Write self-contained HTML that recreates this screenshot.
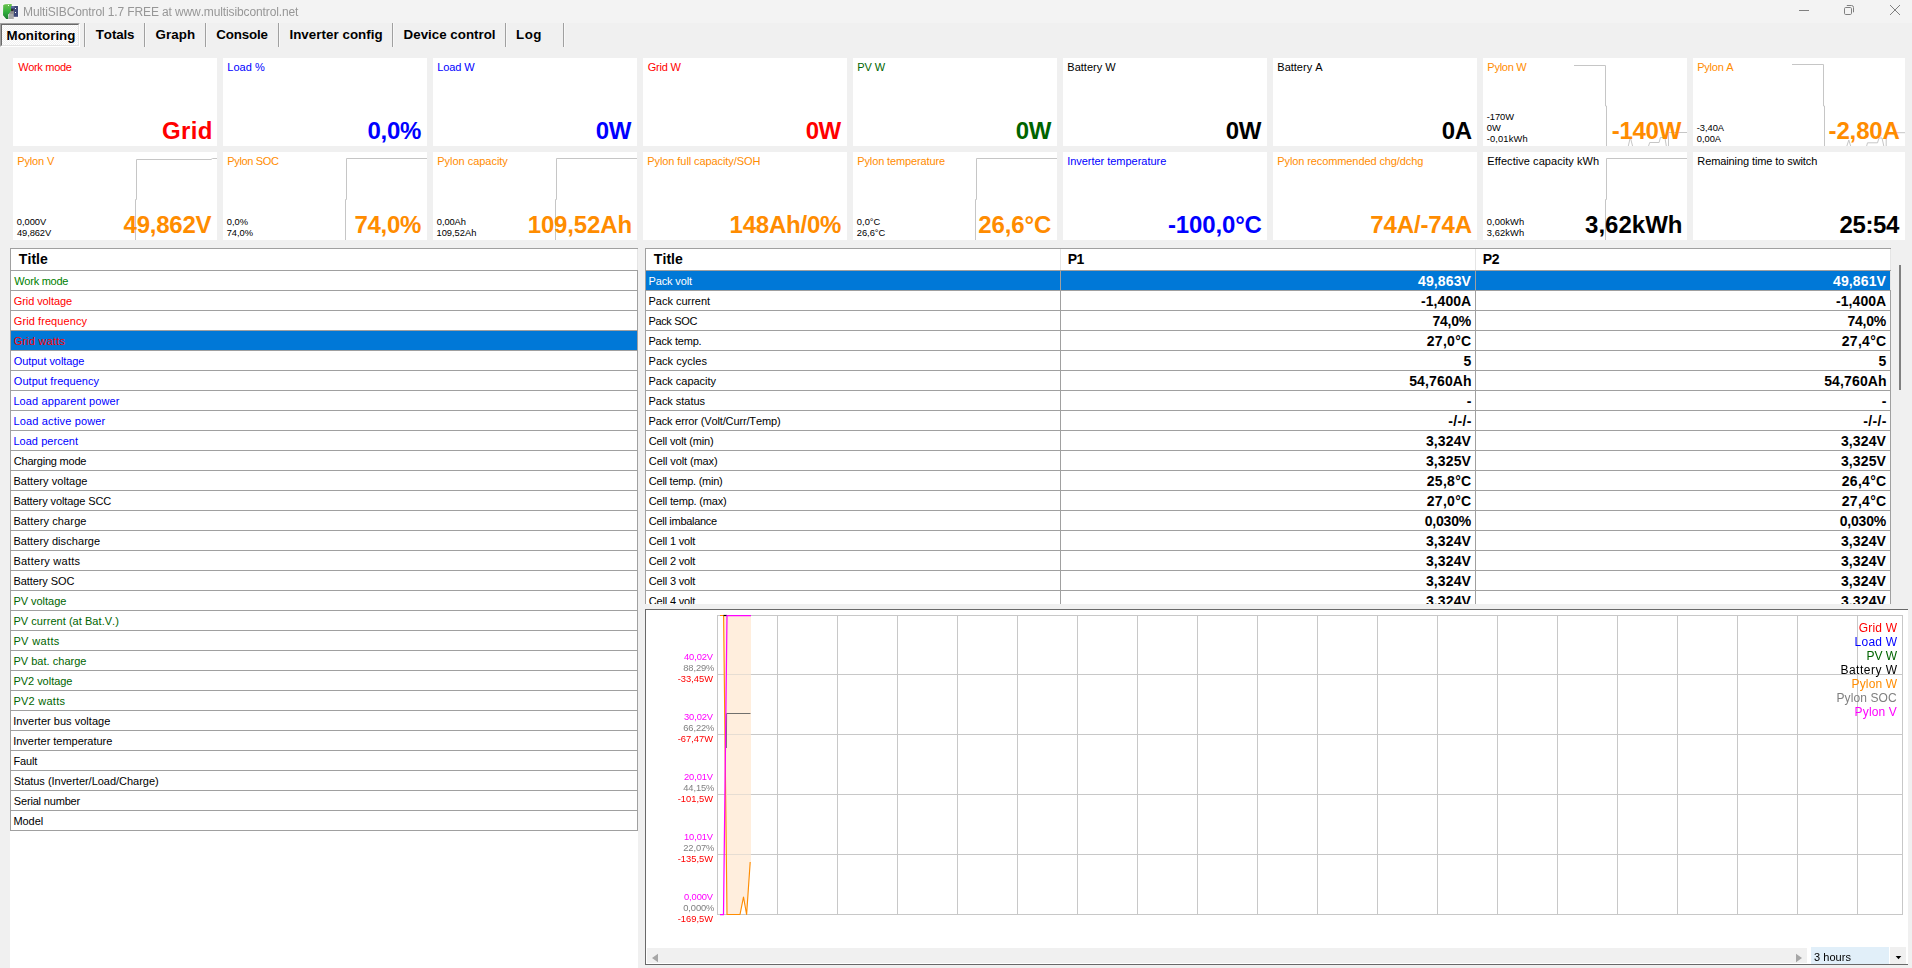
<!DOCTYPE html><html><head><meta charset="utf-8"><title>MultiSIBControl</title>
<style>html,body{margin:0;padding:0;}body{width:1912px;height:968px;overflow:hidden;background:#f0f0f0;position:relative;font-family:"Liberation Sans", sans-serif;font-kerning:none;}div{box-sizing:border-box;}svg{position:absolute;left:0;top:0;}</style></head><body>
<div style="position:absolute;left:0px;top:0px;width:1912px;height:23px;background:#f3f3f3;"></div>
<svg width="24" height="23" viewBox="0 0 24 23"><defs><linearGradient id="gg" x1="0" y1="0" x2="0" y2="1"><stop offset="0" stop-color="#6cc24e"/><stop offset="0.55" stop-color="#2fae3c"/><stop offset="1" stop-color="#1f7a34"/></linearGradient></defs><path d="M2.6 3.6 H12.2 V20 H5.5 L2.6 16.5 Z" fill="#fff" opacity="0.75"/><rect x="10.5" y="5.3" width="8.2" height="12.2" fill="#fff" opacity="0.75"/><path d="M3.2 5 L5 4.2 L11.8 4 L11.5 12 L8.2 14.5 L8.4 18.9 L6.2 18.9 L3 15.2 Z" fill="url(#gg)"/><rect x="11" y="6" width="7" height="10.8" fill="#3d4878"/><rect x="11" y="6" width="3.5" height="2.2" fill="#5f6c9e"/><path d="M8.3 18.9 L9.3 13.5 L11 10.8 L13.6 10.4 L13.8 18.9 Z" fill="#a9a9a9"/><path d="M9.3 13.5 L11 10.8 L13.6 10.4 L13.7 14 Z" fill="#8c8c8c"/><rect x="11.1" y="8.9" width="2.3" height="2.2" fill="#2e2e2e"/><rect x="15" y="8" width="1" height="1" fill="#fff"/><rect x="15" y="12" width="1" height="1" fill="#fff"/><rect x="8" y="5" width="1" height="1" fill="#f0fff0"/></svg>
<div style="position:absolute;left:22.92px;top:5.74px;font-size:12px;line-height:12px;color:#979797;white-space:pre;letter-spacing:-0.121px;will-change:transform;">MultiSIBControl 1.7 FREE at www.multisibcontrol.net</div>
<svg width="1912" height="23" viewBox="0 0 1912 23" fill="none" stroke="#808080" stroke-width="1"><path d="M1799 10.5 H1809"/><rect x="1844.5" y="7.5" width="7" height="7" rx="1.2"/><path d="M1846.8 5.5 H1851.5 Q1853.5 5.5 1853.5 7.5 V12.3"/><path d="M1890 5 L1900 15 M1900 5 L1890 15"/></svg>
<div style="position:absolute;left:0px;top:23px;width:80px;height:24px;background:#f0f0f0;border-top:1px solid #a0a0a0;border-left:1px solid #a0a0a0;border-bottom:1px solid #fff;border-right:1px solid #fff;"></div>
<div style="position:absolute;left:1px;top:24px;width:78px;height:22px;background:#f0f0f0;border-top:1px solid #696969;border-left:1px solid #696969;border-bottom:1px solid #e3e3e3;border-right:1px solid #e3e3e3;background:repeating-conic-gradient(#ffffff 0% 25%, #f0f0f0 0% 50%) 0 0/2px 2px;"></div>
<div style="position:absolute;left:6.61px;top:28.52px;font-size:13.33px;line-height:13.33px;color:#000;white-space:pre;font-weight:bold;letter-spacing:-0.007px;">Monitoring</div>
<div style="position:absolute;left:95.85px;top:27.52px;font-size:13.33px;line-height:13.33px;color:#000;white-space:pre;font-weight:bold;letter-spacing:-0.112px;">Totals</div>
<div style="position:absolute;left:155.45px;top:27.52px;font-size:13.33px;line-height:13.33px;color:#000;white-space:pre;font-weight:bold;letter-spacing:0.130px;">Graph</div>
<div style="position:absolute;left:216.25px;top:27.52px;font-size:13.33px;line-height:13.33px;color:#000;white-space:pre;font-weight:bold;letter-spacing:-0.147px;">Console</div>
<div style="position:absolute;left:289.41px;top:27.52px;font-size:13.33px;line-height:13.33px;color:#000;white-space:pre;font-weight:bold;letter-spacing:0.050px;">Inverter config</div>
<div style="position:absolute;left:403.61px;top:27.52px;font-size:13.33px;line-height:13.33px;color:#000;white-space:pre;font-weight:bold;letter-spacing:0.006px;">Device control</div>
<div style="position:absolute;left:516.11px;top:27.52px;font-size:13.33px;line-height:13.33px;color:#000;white-space:pre;font-weight:bold;letter-spacing:0.428px;">Log</div>
<div style="position:absolute;left:84px;top:23px;width:1px;height:24px;background:#a0a0a0;"></div>
<div style="position:absolute;left:85px;top:23px;width:1px;height:24px;background:#f8f8f8;"></div>
<div style="position:absolute;left:144px;top:23px;width:1px;height:24px;background:#a0a0a0;"></div>
<div style="position:absolute;left:145px;top:23px;width:1px;height:24px;background:#f8f8f8;"></div>
<div style="position:absolute;left:205px;top:23px;width:1px;height:24px;background:#a0a0a0;"></div>
<div style="position:absolute;left:206px;top:23px;width:1px;height:24px;background:#f8f8f8;"></div>
<div style="position:absolute;left:278px;top:23px;width:1px;height:24px;background:#a0a0a0;"></div>
<div style="position:absolute;left:279px;top:23px;width:1px;height:24px;background:#f8f8f8;"></div>
<div style="position:absolute;left:392px;top:23px;width:1px;height:24px;background:#a0a0a0;"></div>
<div style="position:absolute;left:393px;top:23px;width:1px;height:24px;background:#f8f8f8;"></div>
<div style="position:absolute;left:505px;top:23px;width:1px;height:24px;background:#a0a0a0;"></div>
<div style="position:absolute;left:506px;top:23px;width:1px;height:24px;background:#f8f8f8;"></div>
<div style="position:absolute;left:563px;top:23px;width:1px;height:24px;background:#a0a0a0;"></div>
<div style="position:absolute;left:564px;top:23px;width:1px;height:24px;background:#f8f8f8;"></div>
<div style="position:absolute;left:13px;top:58px;width:204px;height:88px;background:#fff;overflow:hidden;"></div>
<div style="position:absolute;left:18.15px;top:61.69px;font-size:11px;line-height:11px;color:#ff0000;white-space:pre;letter-spacing:-0.312px;">Work mode</div>
<div style="position:absolute;left:161.92px;top:119.18px;font-size:24px;line-height:24px;color:#ff0000;white-space:pre;font-weight:bold;letter-spacing:0.410px;">Grid</div>
<div style="position:absolute;left:223px;top:58px;width:204px;height:88px;background:#fff;overflow:hidden;"></div>
<div style="position:absolute;left:227.30px;top:61.69px;font-size:11px;line-height:11px;color:#0000ff;white-space:pre;letter-spacing:0.037px;">Load %</div>
<div style="position:absolute;left:367.55px;top:119.18px;font-size:24px;line-height:24px;color:#0000ff;white-space:pre;font-weight:bold;letter-spacing:-0.274px;">0,0%</div>
<div style="position:absolute;left:433px;top:58px;width:204px;height:88px;background:#fff;overflow:hidden;"></div>
<div style="position:absolute;left:437.30px;top:61.69px;font-size:11px;line-height:11px;color:#0000ff;white-space:pre;letter-spacing:-0.114px;">Load W</div>
<div style="position:absolute;left:595.85px;top:119.18px;font-size:24px;line-height:24px;color:#0000ff;white-space:pre;font-weight:bold;letter-spacing:-0.527px;">0W</div>
<div style="position:absolute;left:643px;top:58px;width:204px;height:88px;background:#fff;overflow:hidden;"></div>
<div style="position:absolute;left:647.65px;top:61.69px;font-size:11px;line-height:11px;color:#ff0000;white-space:pre;letter-spacing:-0.206px;">Grid W</div>
<div style="position:absolute;left:805.65px;top:119.18px;font-size:24px;line-height:24px;color:#ff0000;white-space:pre;font-weight:bold;letter-spacing:-0.427px;">0W</div>
<div style="position:absolute;left:853px;top:58px;width:204px;height:88px;background:#fff;overflow:hidden;"></div>
<div style="position:absolute;left:857.30px;top:61.69px;font-size:11px;line-height:11px;color:#006400;white-space:pre;letter-spacing:-0.124px;">PV W</div>
<div style="position:absolute;left:1015.65px;top:119.18px;font-size:24px;line-height:24px;color:#006400;white-space:pre;font-weight:bold;letter-spacing:-0.327px;">0W</div>
<div style="position:absolute;left:1063px;top:58px;width:204px;height:88px;background:#fff;overflow:hidden;"></div>
<div style="position:absolute;left:1067.30px;top:61.69px;font-size:11px;line-height:11px;color:#000000;white-space:pre;letter-spacing:0.007px;">Battery W</div>
<div style="position:absolute;left:1225.65px;top:119.18px;font-size:24px;line-height:24px;color:#000000;white-space:pre;font-weight:bold;letter-spacing:-0.327px;">0W</div>
<div style="position:absolute;left:1273px;top:58px;width:204px;height:88px;background:#fff;overflow:hidden;"></div>
<div style="position:absolute;left:1277.30px;top:61.69px;font-size:11px;line-height:11px;color:#000000;white-space:pre;">Battery A</div>
<div style="position:absolute;left:1441.75px;top:119.18px;font-size:24px;line-height:24px;color:#000000;white-space:pre;font-weight:bold;letter-spacing:-0.298px;">0A</div>
<div style="position:absolute;left:1483px;top:58px;width:204px;height:88px;background:#fff;overflow:hidden;"><svg width="204" height="88" viewBox="0 0 204 88" fill="none" stroke="#c6c6c6" stroke-width="1"><path d="M91 7.5 L122.5 7.5 L122.5 48 L123.5 48 L123.5 88.5 L145.2 88.5 L147.3 79.3 L149.7 88.5 L165.4 88.5 L166.7 84.5 L176.1 84.5 L177.4 79.5 L181.9 79.5 L183.4 88.5 L185.5 88.5 L185.5 74.5 L205 74.5"/></svg></div>
<div style="position:absolute;left:1487.30px;top:61.69px;font-size:11px;line-height:11px;color:#ff8c00;white-space:pre;letter-spacing:-0.252px;">Pylon W</div>
<div style="position:absolute;left:1611.66px;top:119.18px;font-size:24px;line-height:24px;color:#ff8c00;white-space:pre;font-weight:bold;letter-spacing:-0.257px;">-140W</div>
<div style="position:absolute;left:1486.79px;top:112.50px;font-size:9.33px;line-height:9.33px;color:#000;white-space:pre;letter-spacing:-0.058px;">-170W</div>
<div style="position:absolute;left:1486.84px;top:123.50px;font-size:9.33px;line-height:9.33px;color:#000;white-space:pre;">0W</div>
<div style="position:absolute;left:1486.79px;top:134.50px;font-size:9.33px;line-height:9.33px;color:#000;white-space:pre;letter-spacing:0.128px;">-0,01kWh</div>
<div style="position:absolute;left:1693px;top:58px;width:212px;height:88px;background:#fff;overflow:hidden;"><svg width="212" height="88" viewBox="0 0 212 88" fill="none" stroke="#c6c6c6" stroke-width="1"><path d="M99 6.5 L130.5 6.5 L130.5 48 L131.5 48 L131.5 88.5 L153.7 88.5 L155.8 82 L157.8 88.5 L173.5 88.5 L174.5 84.8 L184.5 84.8 L186 80 L189 80 L190.9 88.5 L193.2 88.5 L193.2 74.7 L213 74.7"/></svg></div>
<div style="position:absolute;left:1697.30px;top:61.69px;font-size:11px;line-height:11px;color:#ff8c00;white-space:pre;letter-spacing:-0.264px;">Pylon A</div>
<div style="position:absolute;left:1828.56px;top:119.18px;font-size:24px;line-height:24px;color:#ff8c00;white-space:pre;font-weight:bold;letter-spacing:-0.133px;">-2,80A</div>
<div style="position:absolute;left:1696.79px;top:123.50px;font-size:9.33px;line-height:9.33px;color:#000;white-space:pre;letter-spacing:-0.051px;">-3,40A</div>
<div style="position:absolute;left:1696.84px;top:134.50px;font-size:9.33px;line-height:9.33px;color:#000;white-space:pre;letter-spacing:-0.050px;">0,00A</div>
<div style="position:absolute;left:13px;top:152px;width:204px;height:88px;background:#fff;overflow:hidden;"><svg width="204" height="88" viewBox="0 0 204 88" fill="none" stroke="#c6c6c6" stroke-width="1"><path d="M122.5 89 V47.5 H123.5 V7.5 H198 L199.5 6.5 H205"/></svg></div>
<div style="position:absolute;left:17.30px;top:155.69px;font-size:11px;line-height:11px;color:#ff8c00;white-space:pre;letter-spacing:-0.160px;">Pylon V</div>
<div style="position:absolute;left:123.54px;top:213.18px;font-size:24px;line-height:24px;color:#ff8c00;white-space:pre;font-weight:bold;letter-spacing:-0.231px;">49,862V</div>
<div style="position:absolute;left:16.84px;top:217.50px;font-size:9.33px;line-height:9.33px;color:#000;white-space:pre;letter-spacing:-0.053px;">0,000V</div>
<div style="position:absolute;left:16.99px;top:228.50px;font-size:9.33px;line-height:9.33px;color:#000;white-space:pre;letter-spacing:-0.101px;">49,862V</div>
<div style="position:absolute;left:223px;top:152px;width:204px;height:88px;background:#fff;overflow:hidden;"><svg width="204" height="88" viewBox="0 0 204 88" fill="none" stroke="#c6c6c6" stroke-width="1"><path d="M122.5 89 V47.5 H123.5 V6.5 H205"/></svg></div>
<div style="position:absolute;left:227.30px;top:155.69px;font-size:11px;line-height:11px;color:#ff8c00;white-space:pre;letter-spacing:-0.348px;">Pylon SOC</div>
<div style="position:absolute;left:354.47px;top:213.18px;font-size:24px;line-height:24px;color:#ff8c00;white-space:pre;font-weight:bold;letter-spacing:-0.272px;">74,0%</div>
<div style="position:absolute;left:226.84px;top:217.50px;font-size:9.33px;line-height:9.33px;color:#000;white-space:pre;letter-spacing:-0.023px;">0,0%</div>
<div style="position:absolute;left:226.72px;top:228.50px;font-size:9.33px;line-height:9.33px;color:#000;white-space:pre;letter-spacing:-0.036px;">74,0%</div>
<div style="position:absolute;left:433px;top:152px;width:204px;height:88px;background:#fff;overflow:hidden;"><svg width="204" height="88" viewBox="0 0 204 88" fill="none" stroke="#c6c6c6" stroke-width="1"><path d="M122.5 89 V47.5 H123.5 V6.5 H205"/></svg></div>
<div style="position:absolute;left:437.30px;top:155.69px;font-size:11px;line-height:11px;color:#ff8c00;white-space:pre;letter-spacing:-0.031px;">Pylon capacity</div>
<div style="position:absolute;left:527.69px;top:213.18px;font-size:24px;line-height:24px;color:#ff8c00;white-space:pre;font-weight:bold;letter-spacing:-0.143px;">109,52Ah</div>
<div style="position:absolute;left:436.84px;top:217.50px;font-size:9.33px;line-height:9.33px;color:#000;white-space:pre;letter-spacing:-0.100px;">0,00Ah</div>
<div style="position:absolute;left:436.49px;top:228.50px;font-size:9.33px;line-height:9.33px;color:#000;white-space:pre;letter-spacing:-0.005px;">109,52Ah</div>
<div style="position:absolute;left:643px;top:152px;width:204px;height:88px;background:#fff;overflow:hidden;"></div>
<div style="position:absolute;left:647.30px;top:155.69px;font-size:11px;line-height:11px;color:#ff8c00;white-space:pre;letter-spacing:-0.083px;">Pylon full capacity/SOH</div>
<div style="position:absolute;left:729.49px;top:213.18px;font-size:24px;line-height:24px;color:#ff8c00;white-space:pre;font-weight:bold;letter-spacing:-0.207px;">148Ah/0%</div>
<div style="position:absolute;left:853px;top:152px;width:204px;height:88px;background:#fff;overflow:hidden;"><svg width="204" height="88" viewBox="0 0 204 88" fill="none" stroke="#c6c6c6" stroke-width="1"><path d="M122.5 89 V47.5 H123.5 V6.5 H205"/></svg></div>
<div style="position:absolute;left:857.30px;top:155.69px;font-size:11px;line-height:11px;color:#ff8c00;white-space:pre;letter-spacing:-0.131px;">Pylon temperature</div>
<div style="position:absolute;left:978.17px;top:213.18px;font-size:24px;line-height:24px;color:#ff8c00;white-space:pre;font-weight:bold;letter-spacing:-0.090px;">26,6°C</div>
<div style="position:absolute;left:856.84px;top:217.50px;font-size:9.33px;line-height:9.33px;color:#000;white-space:pre;letter-spacing:0.020px;">0,0°C</div>
<div style="position:absolute;left:856.73px;top:228.50px;font-size:9.33px;line-height:9.33px;color:#000;white-space:pre;">26,6°C</div>
<div style="position:absolute;left:1063px;top:152px;width:204px;height:88px;background:#fff;overflow:hidden;"></div>
<div style="position:absolute;left:1067.18px;top:155.69px;font-size:11px;line-height:11px;color:#0000ff;white-space:pre;letter-spacing:-0.029px;">Inverter temperature</div>
<div style="position:absolute;left:1167.96px;top:213.18px;font-size:24px;line-height:24px;color:#0000ff;white-space:pre;font-weight:bold;letter-spacing:-0.141px;">-100,0°C</div>
<div style="position:absolute;left:1273px;top:152px;width:204px;height:88px;background:#fff;overflow:hidden;"></div>
<div style="position:absolute;left:1277.30px;top:155.69px;font-size:11px;line-height:11px;color:#ff8c00;white-space:pre;letter-spacing:-0.103px;">Pylon recommended chg/dchg</div>
<div style="position:absolute;left:1370.37px;top:213.18px;font-size:24px;line-height:24px;color:#ff8c00;white-space:pre;font-weight:bold;letter-spacing:-0.136px;">74A/-74A</div>
<div style="position:absolute;left:1483px;top:152px;width:204px;height:88px;background:#fff;overflow:hidden;"><svg width="204" height="88" viewBox="0 0 204 88" fill="none" stroke="#c6c6c6" stroke-width="1"><path d="M122.5 89 V47.5 H123.5 V6.5 H205"/></svg></div>
<div style="position:absolute;left:1487.30px;top:155.69px;font-size:11px;line-height:11px;color:#000000;white-space:pre;letter-spacing:0.056px;">Effective capacity kWh</div>
<div style="position:absolute;left:1585.05px;top:213.18px;font-size:24px;line-height:24px;color:#000000;white-space:pre;font-weight:bold;letter-spacing:0.011px;">3,62kWh</div>
<div style="position:absolute;left:1486.84px;top:217.50px;font-size:9.33px;line-height:9.33px;color:#000;white-space:pre;letter-spacing:0.092px;">0,00kWh</div>
<div style="position:absolute;left:1486.84px;top:228.50px;font-size:9.33px;line-height:9.33px;color:#000;white-space:pre;letter-spacing:0.090px;">3,62kWh</div>
<div style="position:absolute;left:1693px;top:152px;width:212px;height:88px;background:#fff;overflow:hidden;"></div>
<div style="position:absolute;left:1697.30px;top:155.69px;font-size:11px;line-height:11px;color:#000000;white-space:pre;letter-spacing:-0.098px;">Remaining time to switch</div>
<div style="position:absolute;left:1839.57px;top:213.18px;font-size:24px;line-height:24px;color:#000000;white-space:pre;font-weight:bold;letter-spacing:-0.380px;">25:54</div>
<div style="position:absolute;left:10px;top:248px;width:628px;height:720px;background:#fff;"></div>
<div style="position:absolute;left:10px;top:248px;width:628px;height:1px;background:#a0a0a0;"></div>
<div style="position:absolute;left:10px;top:248px;width:1px;height:583px;background:#a0a0a0;"></div>
<div style="position:absolute;left:637px;top:270px;width:1px;height:561px;background:#a0a0a0;"></div>
<div style="position:absolute;left:637px;top:249px;width:1px;height:21px;background:#e5e5e5;"></div>
<div style="position:absolute;left:18.84px;top:252.15px;font-size:14px;line-height:14px;color:#000;white-space:pre;font-weight:bold;letter-spacing:0.064px;">Title</div>
<div style="position:absolute;left:10px;top:270px;width:628px;height:1px;background:#a0a0a0;"></div>
<div style="position:absolute;left:14.25px;top:275.69px;font-size:11px;line-height:11px;color:#008000;white-space:pre;letter-spacing:-0.262px;">Work mode</div>
<div style="position:absolute;left:10px;top:290px;width:628px;height:1px;background:#a0a0a0;"></div>
<div style="position:absolute;left:13.75px;top:295.69px;font-size:11px;line-height:11px;color:#ff0000;white-space:pre;letter-spacing:-0.088px;">Grid voltage</div>
<div style="position:absolute;left:10px;top:310px;width:628px;height:1px;background:#a0a0a0;"></div>
<div style="position:absolute;left:13.75px;top:315.69px;font-size:11px;line-height:11px;color:#ff0000;white-space:pre;letter-spacing:0.087px;">Grid frequency</div>
<div style="position:absolute;left:11px;top:331px;width:626px;height:19px;background:#0078d7;"></div>
<div style="position:absolute;left:10px;top:330px;width:628px;height:1px;background:#a0a0a0;"></div>
<div style="position:absolute;left:13.75px;top:335.69px;font-size:11px;line-height:11px;color:#ff0000;white-space:pre;letter-spacing:0.193px;">Grid watts</div>
<div style="position:absolute;left:10px;top:350px;width:628px;height:1px;background:#a0a0a0;"></div>
<div style="position:absolute;left:13.78px;top:355.69px;font-size:11px;line-height:11px;color:#0000ff;white-space:pre;letter-spacing:-0.065px;">Output voltage</div>
<div style="position:absolute;left:10px;top:370px;width:628px;height:1px;background:#a0a0a0;"></div>
<div style="position:absolute;left:13.78px;top:375.69px;font-size:11px;line-height:11px;color:#0000ff;white-space:pre;letter-spacing:0.064px;">Output frequency</div>
<div style="position:absolute;left:10px;top:390px;width:628px;height:1px;background:#a0a0a0;"></div>
<div style="position:absolute;left:13.40px;top:395.69px;font-size:11px;line-height:11px;color:#0000ff;white-space:pre;letter-spacing:0.112px;">Load apparent power</div>
<div style="position:absolute;left:10px;top:410px;width:628px;height:1px;background:#a0a0a0;"></div>
<div style="position:absolute;left:13.40px;top:415.69px;font-size:11px;line-height:11px;color:#0000ff;white-space:pre;letter-spacing:0.163px;">Load active power</div>
<div style="position:absolute;left:10px;top:430px;width:628px;height:1px;background:#a0a0a0;"></div>
<div style="position:absolute;left:13.40px;top:435.69px;font-size:11px;line-height:11px;color:#0000ff;white-space:pre;letter-spacing:0.042px;">Load percent</div>
<div style="position:absolute;left:10px;top:450px;width:628px;height:1px;background:#a0a0a0;"></div>
<div style="position:absolute;left:13.74px;top:455.69px;font-size:11px;line-height:11px;color:#000000;white-space:pre;letter-spacing:-0.205px;">Charging mode</div>
<div style="position:absolute;left:10px;top:470px;width:628px;height:1px;background:#a0a0a0;"></div>
<div style="position:absolute;left:13.40px;top:475.69px;font-size:11px;line-height:11px;color:#000000;white-space:pre;letter-spacing:0.051px;">Battery voltage</div>
<div style="position:absolute;left:10px;top:490px;width:628px;height:1px;background:#a0a0a0;"></div>
<div style="position:absolute;left:13.40px;top:495.69px;font-size:11px;line-height:11px;color:#000000;white-space:pre;letter-spacing:-0.102px;">Battery voltage SCC</div>
<div style="position:absolute;left:10px;top:510px;width:628px;height:1px;background:#a0a0a0;"></div>
<div style="position:absolute;left:13.40px;top:515.69px;font-size:11px;line-height:11px;color:#000000;white-space:pre;letter-spacing:0.120px;">Battery charge</div>
<div style="position:absolute;left:10px;top:530px;width:628px;height:1px;background:#a0a0a0;"></div>
<div style="position:absolute;left:13.40px;top:535.69px;font-size:11px;line-height:11px;color:#000000;white-space:pre;letter-spacing:0.074px;">Battery discharge</div>
<div style="position:absolute;left:10px;top:550px;width:628px;height:1px;background:#a0a0a0;"></div>
<div style="position:absolute;left:13.40px;top:555.69px;font-size:11px;line-height:11px;color:#000000;white-space:pre;letter-spacing:0.260px;">Battery watts</div>
<div style="position:absolute;left:10px;top:570px;width:628px;height:1px;background:#a0a0a0;"></div>
<div style="position:absolute;left:13.40px;top:575.69px;font-size:11px;line-height:11px;color:#000000;white-space:pre;letter-spacing:-0.072px;">Battery SOC</div>
<div style="position:absolute;left:10px;top:590px;width:628px;height:1px;background:#a0a0a0;"></div>
<div style="position:absolute;left:13.40px;top:595.69px;font-size:11px;line-height:11px;color:#006400;white-space:pre;letter-spacing:-0.023px;">PV voltage</div>
<div style="position:absolute;left:10px;top:610px;width:628px;height:1px;background:#a0a0a0;"></div>
<div style="position:absolute;left:13.40px;top:615.69px;font-size:11px;line-height:11px;color:#006400;white-space:pre;letter-spacing:0.045px;">PV current (at Bat.V.)</div>
<div style="position:absolute;left:10px;top:630px;width:628px;height:1px;background:#a0a0a0;"></div>
<div style="position:absolute;left:13.40px;top:635.69px;font-size:11px;line-height:11px;color:#006400;white-space:pre;letter-spacing:0.357px;">PV watts</div>
<div style="position:absolute;left:10px;top:650px;width:628px;height:1px;background:#a0a0a0;"></div>
<div style="position:absolute;left:13.40px;top:655.69px;font-size:11px;line-height:11px;color:#006400;white-space:pre;letter-spacing:0.025px;">PV bat. charge</div>
<div style="position:absolute;left:10px;top:670px;width:628px;height:1px;background:#a0a0a0;"></div>
<div style="position:absolute;left:13.40px;top:675.69px;font-size:11px;line-height:11px;color:#006400;white-space:pre;letter-spacing:-0.023px;">PV2 voltage</div>
<div style="position:absolute;left:10px;top:690px;width:628px;height:1px;background:#a0a0a0;"></div>
<div style="position:absolute;left:13.40px;top:695.69px;font-size:11px;line-height:11px;color:#006400;white-space:pre;letter-spacing:0.260px;">PV2 watts</div>
<div style="position:absolute;left:10px;top:710px;width:628px;height:1px;background:#a0a0a0;"></div>
<div style="position:absolute;left:13.28px;top:715.69px;font-size:11px;line-height:11px;color:#000000;white-space:pre;letter-spacing:0.021px;">Inverter bus voltage</div>
<div style="position:absolute;left:10px;top:730px;width:628px;height:1px;background:#a0a0a0;"></div>
<div style="position:absolute;left:13.28px;top:735.69px;font-size:11px;line-height:11px;color:#000000;white-space:pre;letter-spacing:-0.034px;">Inverter temperature</div>
<div style="position:absolute;left:10px;top:750px;width:628px;height:1px;background:#a0a0a0;"></div>
<div style="position:absolute;left:13.40px;top:755.69px;font-size:11px;line-height:11px;color:#000000;white-space:pre;letter-spacing:-0.143px;">Fault</div>
<div style="position:absolute;left:10px;top:770px;width:628px;height:1px;background:#a0a0a0;"></div>
<div style="position:absolute;left:13.80px;top:775.69px;font-size:11px;line-height:11px;color:#000000;white-space:pre;letter-spacing:-0.023px;">Status (Inverter/Load/Charge)</div>
<div style="position:absolute;left:10px;top:790px;width:628px;height:1px;background:#a0a0a0;"></div>
<div style="position:absolute;left:13.80px;top:795.69px;font-size:11px;line-height:11px;color:#000000;white-space:pre;letter-spacing:-0.174px;">Serial number</div>
<div style="position:absolute;left:10px;top:810px;width:628px;height:1px;background:#a0a0a0;"></div>
<div style="position:absolute;left:13.40px;top:815.69px;font-size:11px;line-height:11px;color:#000000;white-space:pre;letter-spacing:-0.030px;">Model</div>
<div style="position:absolute;left:10px;top:830px;width:628px;height:1px;background:#a0a0a0;"></div>
<div style="position:absolute;left:645px;top:248px;width:1246px;height:356px;overflow:hidden;background:#fff;">
<div style="position:absolute;left:0px;top:0px;width:1246px;height:1px;background:#a0a0a0;"></div>
<div style="position:absolute;left:0px;top:0px;width:1px;height:356px;background:#a0a0a0;"></div>
<div style="position:absolute;left:415px;top:1px;width:1px;height:21px;background:#e5e5e5;"></div>
<div style="position:absolute;left:830px;top:1px;width:1px;height:21px;background:#e5e5e5;"></div>
<div style="position:absolute;left:1245px;top:1px;width:1px;height:21px;background:#e5e5e5;"></div>
<div style="position:absolute;left:8.84px;top:4.15px;font-size:14px;line-height:14px;color:#000;white-space:pre;font-weight:bold;letter-spacing:0.064px;">Title</div>
<div style="position:absolute;left:422.66px;top:4.15px;font-size:14px;line-height:14px;color:#000;white-space:pre;font-weight:bold;letter-spacing:-0.400px;">P1</div>
<div style="position:absolute;left:837.66px;top:4.15px;font-size:14px;line-height:14px;color:#000;white-space:pre;font-weight:bold;letter-spacing:-0.200px;">P2</div>
<div style="position:absolute;left:1px;top:23px;width:1244px;height:19px;background:#0078d7;"></div>
<div style="position:absolute;left:0px;top:22px;width:1246px;height:1px;background:#a0a0a0;"></div>
<div style="position:absolute;left:415px;top:22px;width:1px;height:21px;background:#a0a0a0;"></div>
<div style="position:absolute;left:830px;top:22px;width:1px;height:21px;background:#a0a0a0;"></div>
<div style="position:absolute;left:1245px;top:23px;width:1px;height:20px;background:#e5e5e5;"></div>
<div style="position:absolute;left:3.50px;top:27.69px;font-size:11px;line-height:11px;color:#fff;white-space:pre;letter-spacing:-0.143px;">Pack volt</div>
<div style="position:absolute;left:773.09px;top:26.05px;font-size:14px;line-height:14px;color:#fff;white-space:pre;font-weight:bold;letter-spacing:0.108px;">49,863V</div>
<div style="position:absolute;left:1188.09px;top:26.05px;font-size:14px;line-height:14px;color:#fff;white-space:pre;font-weight:bold;letter-spacing:0.108px;">49,861V</div>
<div style="position:absolute;left:0px;top:42px;width:1246px;height:1px;background:#a0a0a0;"></div>
<div style="position:absolute;left:415px;top:42px;width:1px;height:21px;background:#a0a0a0;"></div>
<div style="position:absolute;left:830px;top:42px;width:1px;height:21px;background:#a0a0a0;"></div>
<div style="position:absolute;left:1245px;top:43px;width:1px;height:20px;background:#a0a0a0;"></div>
<div style="position:absolute;left:3.50px;top:47.69px;font-size:11px;line-height:11px;color:#000;white-space:pre;letter-spacing:-0.015px;">Pack current</div>
<div style="position:absolute;left:776.05px;top:46.05px;font-size:14px;line-height:14px;color:#000;white-space:pre;font-weight:bold;letter-spacing:0.052px;">-1,400A</div>
<div style="position:absolute;left:1191.05px;top:46.05px;font-size:14px;line-height:14px;color:#000;white-space:pre;font-weight:bold;letter-spacing:0.052px;">-1,400A</div>
<div style="position:absolute;left:0px;top:62px;width:1246px;height:1px;background:#a0a0a0;"></div>
<div style="position:absolute;left:415px;top:62px;width:1px;height:21px;background:#a0a0a0;"></div>
<div style="position:absolute;left:830px;top:62px;width:1px;height:21px;background:#a0a0a0;"></div>
<div style="position:absolute;left:1245px;top:63px;width:1px;height:20px;background:#a0a0a0;"></div>
<div style="position:absolute;left:3.50px;top:67.69px;font-size:11px;line-height:11px;color:#000;white-space:pre;letter-spacing:-0.361px;">Pack SOC</div>
<div style="position:absolute;left:787.40px;top:66.05px;font-size:14px;line-height:14px;color:#000;white-space:pre;font-weight:bold;letter-spacing:-0.231px;">74,0%</div>
<div style="position:absolute;left:1202.40px;top:66.05px;font-size:14px;line-height:14px;color:#000;white-space:pre;font-weight:bold;letter-spacing:-0.231px;">74,0%</div>
<div style="position:absolute;left:0px;top:82px;width:1246px;height:1px;background:#a0a0a0;"></div>
<div style="position:absolute;left:415px;top:82px;width:1px;height:21px;background:#a0a0a0;"></div>
<div style="position:absolute;left:830px;top:82px;width:1px;height:21px;background:#a0a0a0;"></div>
<div style="position:absolute;left:1245px;top:83px;width:1px;height:20px;background:#a0a0a0;"></div>
<div style="position:absolute;left:3.50px;top:87.69px;font-size:11px;line-height:11px;color:#000;white-space:pre;letter-spacing:-0.213px;">Pack temp.</div>
<div style="position:absolute;left:781.81px;top:86.05px;font-size:14px;line-height:14px;color:#000;white-space:pre;font-weight:bold;letter-spacing:0.282px;">27,0°C</div>
<div style="position:absolute;left:1196.81px;top:86.05px;font-size:14px;line-height:14px;color:#000;white-space:pre;font-weight:bold;letter-spacing:0.282px;">27,4°C</div>
<div style="position:absolute;left:0px;top:102px;width:1246px;height:1px;background:#a0a0a0;"></div>
<div style="position:absolute;left:415px;top:102px;width:1px;height:21px;background:#a0a0a0;"></div>
<div style="position:absolute;left:830px;top:102px;width:1px;height:21px;background:#a0a0a0;"></div>
<div style="position:absolute;left:1245px;top:103px;width:1px;height:20px;background:#a0a0a0;"></div>
<div style="position:absolute;left:3.50px;top:107.69px;font-size:11px;line-height:11px;color:#000;white-space:pre;letter-spacing:0.043px;">Pack cycles</div>
<div style="position:absolute;left:818.40px;top:106.05px;font-size:14px;line-height:14px;color:#000;white-space:pre;font-weight:bold;">5</div>
<div style="position:absolute;left:1233.40px;top:106.05px;font-size:14px;line-height:14px;color:#000;white-space:pre;font-weight:bold;">5</div>
<div style="position:absolute;left:0px;top:122px;width:1246px;height:1px;background:#a0a0a0;"></div>
<div style="position:absolute;left:415px;top:122px;width:1px;height:21px;background:#a0a0a0;"></div>
<div style="position:absolute;left:830px;top:122px;width:1px;height:21px;background:#a0a0a0;"></div>
<div style="position:absolute;left:1245px;top:123px;width:1px;height:20px;background:#a0a0a0;"></div>
<div style="position:absolute;left:3.50px;top:127.69px;font-size:11px;line-height:11px;color:#000;white-space:pre;letter-spacing:-0.028px;">Pack capacity</div>
<div style="position:absolute;left:764.17px;top:126.05px;font-size:14px;line-height:14px;color:#000;white-space:pre;font-weight:bold;letter-spacing:0.145px;">54,760Ah</div>
<div style="position:absolute;left:1179.17px;top:126.05px;font-size:14px;line-height:14px;color:#000;white-space:pre;font-weight:bold;letter-spacing:0.145px;">54,760Ah</div>
<div style="position:absolute;left:0px;top:142px;width:1246px;height:1px;background:#a0a0a0;"></div>
<div style="position:absolute;left:415px;top:142px;width:1px;height:21px;background:#a0a0a0;"></div>
<div style="position:absolute;left:830px;top:142px;width:1px;height:21px;background:#a0a0a0;"></div>
<div style="position:absolute;left:1245px;top:143px;width:1px;height:20px;background:#a0a0a0;"></div>
<div style="position:absolute;left:3.50px;top:147.69px;font-size:11px;line-height:11px;color:#000;white-space:pre;letter-spacing:-0.036px;">Pack status</div>
<div style="position:absolute;left:821.70px;top:146.05px;font-size:14px;line-height:14px;color:#000;white-space:pre;font-weight:bold;">-</div>
<div style="position:absolute;left:1236.70px;top:146.05px;font-size:14px;line-height:14px;color:#000;white-space:pre;font-weight:bold;">-</div>
<div style="position:absolute;left:0px;top:162px;width:1246px;height:1px;background:#a0a0a0;"></div>
<div style="position:absolute;left:415px;top:162px;width:1px;height:21px;background:#a0a0a0;"></div>
<div style="position:absolute;left:830px;top:162px;width:1px;height:21px;background:#a0a0a0;"></div>
<div style="position:absolute;left:1245px;top:163px;width:1px;height:20px;background:#a0a0a0;"></div>
<div style="position:absolute;left:3.50px;top:167.69px;font-size:11px;line-height:11px;color:#000;white-space:pre;letter-spacing:-0.139px;">Pack error (Volt/Curr/Temp)</div>
<div style="position:absolute;left:803.15px;top:166.05px;font-size:14px;line-height:14px;color:#000;white-space:pre;font-weight:bold;letter-spacing:0.360px;">-/-/-</div>
<div style="position:absolute;left:1218.15px;top:166.05px;font-size:14px;line-height:14px;color:#000;white-space:pre;font-weight:bold;letter-spacing:0.360px;">-/-/-</div>
<div style="position:absolute;left:0px;top:182px;width:1246px;height:1px;background:#a0a0a0;"></div>
<div style="position:absolute;left:415px;top:182px;width:1px;height:21px;background:#a0a0a0;"></div>
<div style="position:absolute;left:830px;top:182px;width:1px;height:21px;background:#a0a0a0;"></div>
<div style="position:absolute;left:1245px;top:183px;width:1px;height:20px;background:#a0a0a0;"></div>
<div style="position:absolute;left:3.84px;top:187.69px;font-size:11px;line-height:11px;color:#000;white-space:pre;letter-spacing:-0.171px;">Cell volt (min)</div>
<div style="position:absolute;left:780.98px;top:186.05px;font-size:14px;line-height:14px;color:#000;white-space:pre;font-weight:bold;letter-spacing:0.109px;">3,324V</div>
<div style="position:absolute;left:1195.98px;top:186.05px;font-size:14px;line-height:14px;color:#000;white-space:pre;font-weight:bold;letter-spacing:0.109px;">3,324V</div>
<div style="position:absolute;left:0px;top:202px;width:1246px;height:1px;background:#a0a0a0;"></div>
<div style="position:absolute;left:415px;top:202px;width:1px;height:21px;background:#a0a0a0;"></div>
<div style="position:absolute;left:830px;top:202px;width:1px;height:21px;background:#a0a0a0;"></div>
<div style="position:absolute;left:1245px;top:203px;width:1px;height:20px;background:#a0a0a0;"></div>
<div style="position:absolute;left:3.84px;top:207.69px;font-size:11px;line-height:11px;color:#000;white-space:pre;letter-spacing:-0.103px;">Cell volt (max)</div>
<div style="position:absolute;left:780.98px;top:206.05px;font-size:14px;line-height:14px;color:#000;white-space:pre;font-weight:bold;letter-spacing:0.109px;">3,325V</div>
<div style="position:absolute;left:1195.98px;top:206.05px;font-size:14px;line-height:14px;color:#000;white-space:pre;font-weight:bold;letter-spacing:0.109px;">3,325V</div>
<div style="position:absolute;left:0px;top:222px;width:1246px;height:1px;background:#a0a0a0;"></div>
<div style="position:absolute;left:415px;top:222px;width:1px;height:21px;background:#a0a0a0;"></div>
<div style="position:absolute;left:830px;top:222px;width:1px;height:21px;background:#a0a0a0;"></div>
<div style="position:absolute;left:1245px;top:223px;width:1px;height:20px;background:#a0a0a0;"></div>
<div style="position:absolute;left:3.84px;top:227.69px;font-size:11px;line-height:11px;color:#000;white-space:pre;letter-spacing:-0.252px;">Cell temp. (min)</div>
<div style="position:absolute;left:781.81px;top:226.05px;font-size:14px;line-height:14px;color:#000;white-space:pre;font-weight:bold;letter-spacing:0.282px;">25,8°C</div>
<div style="position:absolute;left:1196.81px;top:226.05px;font-size:14px;line-height:14px;color:#000;white-space:pre;font-weight:bold;letter-spacing:0.282px;">26,4°C</div>
<div style="position:absolute;left:0px;top:242px;width:1246px;height:1px;background:#a0a0a0;"></div>
<div style="position:absolute;left:415px;top:242px;width:1px;height:21px;background:#a0a0a0;"></div>
<div style="position:absolute;left:830px;top:242px;width:1px;height:21px;background:#a0a0a0;"></div>
<div style="position:absolute;left:1245px;top:243px;width:1px;height:20px;background:#a0a0a0;"></div>
<div style="position:absolute;left:3.84px;top:247.69px;font-size:11px;line-height:11px;color:#000;white-space:pre;letter-spacing:-0.189px;">Cell temp. (max)</div>
<div style="position:absolute;left:781.81px;top:246.05px;font-size:14px;line-height:14px;color:#000;white-space:pre;font-weight:bold;letter-spacing:0.282px;">27,0°C</div>
<div style="position:absolute;left:1196.81px;top:246.05px;font-size:14px;line-height:14px;color:#000;white-space:pre;font-weight:bold;letter-spacing:0.282px;">27,4°C</div>
<div style="position:absolute;left:0px;top:262px;width:1246px;height:1px;background:#a0a0a0;"></div>
<div style="position:absolute;left:415px;top:262px;width:1px;height:21px;background:#a0a0a0;"></div>
<div style="position:absolute;left:830px;top:262px;width:1px;height:21px;background:#a0a0a0;"></div>
<div style="position:absolute;left:1245px;top:263px;width:1px;height:20px;background:#a0a0a0;"></div>
<div style="position:absolute;left:3.84px;top:267.69px;font-size:11px;line-height:11px;color:#000;white-space:pre;letter-spacing:-0.292px;">Cell imbalance</div>
<div style="position:absolute;left:779.75px;top:266.05px;font-size:14px;line-height:14px;color:#000;white-space:pre;font-weight:bold;letter-spacing:-0.212px;">0,030%</div>
<div style="position:absolute;left:1194.75px;top:266.05px;font-size:14px;line-height:14px;color:#000;white-space:pre;font-weight:bold;letter-spacing:-0.212px;">0,030%</div>
<div style="position:absolute;left:0px;top:282px;width:1246px;height:1px;background:#a0a0a0;"></div>
<div style="position:absolute;left:415px;top:282px;width:1px;height:21px;background:#a0a0a0;"></div>
<div style="position:absolute;left:830px;top:282px;width:1px;height:21px;background:#a0a0a0;"></div>
<div style="position:absolute;left:1245px;top:283px;width:1px;height:20px;background:#a0a0a0;"></div>
<div style="position:absolute;left:3.84px;top:287.69px;font-size:11px;line-height:11px;color:#000;white-space:pre;letter-spacing:-0.186px;">Cell 1 volt</div>
<div style="position:absolute;left:780.98px;top:286.05px;font-size:14px;line-height:14px;color:#000;white-space:pre;font-weight:bold;letter-spacing:0.109px;">3,324V</div>
<div style="position:absolute;left:1195.98px;top:286.05px;font-size:14px;line-height:14px;color:#000;white-space:pre;font-weight:bold;letter-spacing:0.109px;">3,324V</div>
<div style="position:absolute;left:0px;top:302px;width:1246px;height:1px;background:#a0a0a0;"></div>
<div style="position:absolute;left:415px;top:302px;width:1px;height:21px;background:#a0a0a0;"></div>
<div style="position:absolute;left:830px;top:302px;width:1px;height:21px;background:#a0a0a0;"></div>
<div style="position:absolute;left:1245px;top:303px;width:1px;height:20px;background:#a0a0a0;"></div>
<div style="position:absolute;left:3.84px;top:307.69px;font-size:11px;line-height:11px;color:#000;white-space:pre;letter-spacing:-0.186px;">Cell 2 volt</div>
<div style="position:absolute;left:780.98px;top:306.05px;font-size:14px;line-height:14px;color:#000;white-space:pre;font-weight:bold;letter-spacing:0.109px;">3,324V</div>
<div style="position:absolute;left:1195.98px;top:306.05px;font-size:14px;line-height:14px;color:#000;white-space:pre;font-weight:bold;letter-spacing:0.109px;">3,324V</div>
<div style="position:absolute;left:0px;top:322px;width:1246px;height:1px;background:#a0a0a0;"></div>
<div style="position:absolute;left:415px;top:322px;width:1px;height:21px;background:#a0a0a0;"></div>
<div style="position:absolute;left:830px;top:322px;width:1px;height:21px;background:#a0a0a0;"></div>
<div style="position:absolute;left:1245px;top:323px;width:1px;height:20px;background:#a0a0a0;"></div>
<div style="position:absolute;left:3.84px;top:327.69px;font-size:11px;line-height:11px;color:#000;white-space:pre;letter-spacing:-0.186px;">Cell 3 volt</div>
<div style="position:absolute;left:780.98px;top:326.05px;font-size:14px;line-height:14px;color:#000;white-space:pre;font-weight:bold;letter-spacing:0.109px;">3,324V</div>
<div style="position:absolute;left:1195.98px;top:326.05px;font-size:14px;line-height:14px;color:#000;white-space:pre;font-weight:bold;letter-spacing:0.109px;">3,324V</div>
<div style="position:absolute;left:0px;top:342px;width:1246px;height:1px;background:#a0a0a0;"></div>
<div style="position:absolute;left:415px;top:342px;width:1px;height:21px;background:#a0a0a0;"></div>
<div style="position:absolute;left:830px;top:342px;width:1px;height:21px;background:#a0a0a0;"></div>
<div style="position:absolute;left:1245px;top:343px;width:1px;height:20px;background:#a0a0a0;"></div>
<div style="position:absolute;left:3.84px;top:347.69px;font-size:11px;line-height:11px;color:#000;white-space:pre;letter-spacing:-0.186px;">Cell 4 volt</div>
<div style="position:absolute;left:780.98px;top:346.05px;font-size:14px;line-height:14px;color:#000;white-space:pre;font-weight:bold;letter-spacing:0.109px;">3,324V</div>
<div style="position:absolute;left:1195.98px;top:346.05px;font-size:14px;line-height:14px;color:#000;white-space:pre;font-weight:bold;letter-spacing:0.109px;">3,324V</div>
</div>
<div style="position:absolute;left:1899px;top:265px;width:2px;height:125px;background:#808080;"></div>
<div style="position:absolute;left:645px;top:609px;width:1263px;height:356px;background:#fff;border-top:1px solid #696969;border-left:1px solid #696969;border-bottom:1px solid #696969;"></div>
<div style="position:absolute;left:647px;top:948px;width:1160px;height:15px;background:#f0f0f0;"></div>
<div style="position:absolute;left:1811px;top:947px;width:78px;height:17px;background:#e1eff9;"></div>
<div style="position:absolute;left:1890px;top:947px;width:16px;height:17px;background:#f0f0f0;"></div>
<svg width="1912" height="968" viewBox="0 0 1912 968"><path d="M652 958 L658 953.8 V962.2 Z" fill="#a6a6a6"/><path d="M1802 958 L1796 953.8 V962.2 Z" fill="#a6a6a6"/><path d="M1895.7 956 h5.6 l-2.8 3.2 z" fill="#000"/></svg>
<div style="position:absolute;left:1813.88px;top:951.69px;font-size:11px;line-height:11px;color:#000;white-space:pre;letter-spacing:0.071px;">3 hours</div>
<svg width="1912" height="968" viewBox="0 0 1912 968" fill="none" shape-rendering="crispEdges"><g stroke="#c8c8c8" stroke-width="1"><path d="M717.5 615 V915"/><path d="M777.5 615 V915"/><path d="M837.5 615 V915"/><path d="M897.5 615 V915"/><path d="M957.5 615 V915"/><path d="M1017.5 615 V915"/><path d="M1077.5 615 V915"/><path d="M1137.5 615 V915"/><path d="M1197.5 615 V915"/><path d="M1257.5 615 V915"/><path d="M1317.5 615 V915"/><path d="M1377.5 615 V915"/><path d="M1437.5 615 V915"/><path d="M1497.5 615 V915"/><path d="M1557.5 615 V915"/><path d="M1617.5 615 V915"/><path d="M1677.5 615 V915"/><path d="M1737.5 615 V915"/><path d="M1797.5 615 V915"/><path d="M1857.5 615 V915"/><path d="M1902.5 615 V915"/><path d="M717 615.5 H1903"/><path d="M717 674.5 H1903"/><path d="M717 734.5 H1903"/><path d="M717 794.5 H1903"/><path d="M717 854.5 H1903"/><path d="M717 914.5 H1903"/></g></svg>
<svg width="1912" height="968" viewBox="0 0 1912 968" fill="none"><path d="M723.6 615 L727 914.5 H740 L743.5 897 L746.6 914.5 L750.2 862 H751 V615 Z" fill="#ffeedd" stroke="none"/><g stroke="#c8c8c8" stroke-width="1" opacity="0.45"><path d="M727 674.5 H751 M727 734.5 H751 M727 794.5 H751 M727 854.5 H751"/></g><path d="M726.4 748 L726.6 713.5 H750.5" stroke="#606060" stroke-width="0.9"/><path d="M720 615.5 H723.6 L727 914.5 H740 L743.5 897 L746.6 914.5 L750.2 862" stroke="#ff8c00" stroke-width="1.15" stroke-linejoin="round"/><path d="M723.5 615.5 H727" stroke="#000" stroke-width="1.2"/><path d="M720 914.5 H723.5 L727 615.5 H751" stroke="#ff00ff" stroke-width="1.25"/></svg>
<div style="position:absolute;left:683.97px;top:653.20px;font-size:9.33px;line-height:9.33px;color:#ff00ff;white-space:pre;letter-spacing:-0.100px;">40,02V</div>
<div style="position:absolute;left:683.29px;top:664.20px;font-size:9.33px;line-height:9.33px;color:#808080;white-space:pre;letter-spacing:-0.100px;">88,29%</div>
<div style="position:absolute;left:677.77px;top:675.30px;font-size:9.33px;line-height:9.33px;color:#ff0000;white-space:pre;">-33,45W</div>
<div style="position:absolute;left:683.97px;top:713.20px;font-size:9.33px;line-height:9.33px;color:#ff00ff;white-space:pre;letter-spacing:-0.100px;">30,02V</div>
<div style="position:absolute;left:683.29px;top:724.20px;font-size:9.33px;line-height:9.33px;color:#808080;white-space:pre;letter-spacing:-0.100px;">66,22%</div>
<div style="position:absolute;left:677.77px;top:735.30px;font-size:9.33px;line-height:9.33px;color:#ff0000;white-space:pre;">-67,47W</div>
<div style="position:absolute;left:683.97px;top:773.20px;font-size:9.33px;line-height:9.33px;color:#ff00ff;white-space:pre;letter-spacing:-0.100px;">20,01V</div>
<div style="position:absolute;left:683.29px;top:784.20px;font-size:9.33px;line-height:9.33px;color:#808080;white-space:pre;letter-spacing:-0.100px;">44,15%</div>
<div style="position:absolute;left:677.77px;top:795.30px;font-size:9.33px;line-height:9.33px;color:#ff0000;white-space:pre;">-101,5W</div>
<div style="position:absolute;left:683.97px;top:833.20px;font-size:9.33px;line-height:9.33px;color:#ff00ff;white-space:pre;letter-spacing:-0.100px;">10,01V</div>
<div style="position:absolute;left:683.29px;top:844.20px;font-size:9.33px;line-height:9.33px;color:#808080;white-space:pre;letter-spacing:-0.100px;">22,07%</div>
<div style="position:absolute;left:677.77px;top:855.30px;font-size:9.33px;line-height:9.33px;color:#ff0000;white-space:pre;">-135,5W</div>
<div style="position:absolute;left:683.97px;top:893.20px;font-size:9.33px;line-height:9.33px;color:#ff00ff;white-space:pre;letter-spacing:-0.100px;">0,000V</div>
<div style="position:absolute;left:683.29px;top:904.20px;font-size:9.33px;line-height:9.33px;color:#808080;white-space:pre;letter-spacing:-0.100px;">0,000%</div>
<div style="position:absolute;left:677.77px;top:915.30px;font-size:9.33px;line-height:9.33px;color:#ff0000;white-space:pre;">-169,5W</div>
<div style="position:absolute;left:1858.80px;top:622.14px;font-size:12px;line-height:12px;color:#ff0000;white-space:pre;letter-spacing:0.183px;">Grid W</div>
<div style="position:absolute;left:1854.62px;top:636.14px;font-size:12px;line-height:12px;color:#0000ff;white-space:pre;letter-spacing:0.214px;">Load W</div>
<div style="position:absolute;left:1866.52px;top:650.14px;font-size:12px;line-height:12px;color:#006400;white-space:pre;letter-spacing:-0.048px;">PV W</div>
<div style="position:absolute;left:1840.42px;top:664.14px;font-size:12px;line-height:12px;color:#000000;white-space:pre;letter-spacing:0.494px;">Battery W</div>
<div style="position:absolute;left:1851.62px;top:678.14px;font-size:12px;line-height:12px;color:#ff8c00;white-space:pre;letter-spacing:0.125px;">Pylon W</div>
<div style="position:absolute;left:1836.42px;top:692.14px;font-size:12px;line-height:12px;color:#808080;white-space:pre;letter-spacing:0.123px;">Pylon SOC</div>
<div style="position:absolute;left:1854.62px;top:706.14px;font-size:12px;line-height:12px;color:#ff00ff;white-space:pre;letter-spacing:0.147px;">Pylon V</div>
</body></html>
